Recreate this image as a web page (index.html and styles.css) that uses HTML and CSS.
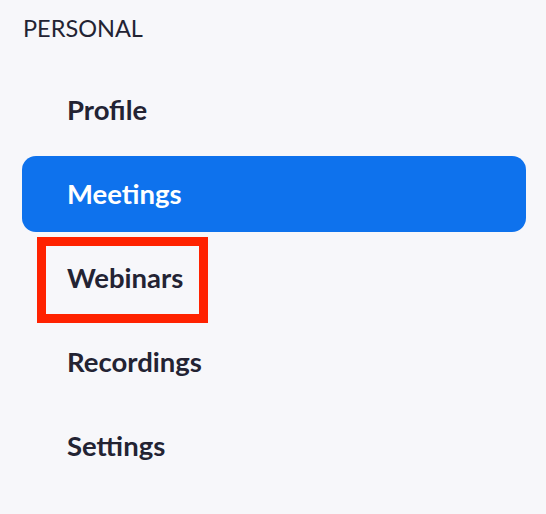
FILE: index.html
```html
<!DOCTYPE html>
<html>
<head>
<meta charset="utf-8">
<link rel="stylesheet" href="styles.css">
</head>
<body>
<nav class="sidebar">
  <div class="section-title">PERSONAL</div>
  <ul class="menu">
    <li class="menu-item">Profile</li>
    <li class="menu-item active">Meetings</li>
    <li class="menu-item highlighted">Webinars<span class="annotation"></span></li>
    <li class="menu-item">Recordings</li>
    <li class="menu-item">Settings</li>
  </ul>
</nav>
</body>
</html>
```

FILE: styles.css
```css
html, body {
  margin: 0;
  padding: 0;
  background: #f7f7fa;
}

body {
  width: 546px;
  height: 514px;
  overflow: hidden;
  font-family: Lato, "Liberation Sans", sans-serif;
  color: #232333;
}

.sidebar {
  padding: 14px 20px 0 22px;
}

.section-title {
  font-size: 23.5px;
  line-height: 28px;
  font-weight: 400;
  padding-left: 1px;
  margin-bottom: 30px;
}

.menu {
  list-style: none;
  margin: 0;
  padding: 0;
  display: flex;
  flex-direction: column;
  gap: 8px;
}

.menu-item {
  position: relative;
  box-sizing: border-box;
  height: 76px;
  display: flex;
  align-items: center;
  padding-left: 45px;
  padding-bottom: 2px;
  font-size: 27.5px;
  font-weight: 700;
  border-radius: 14px;
}

.menu-item.active {
  background: #0e72ed;
  color: #ffffff;
}

.annotation {
  position: absolute;
  left: 15px;
  top: -3px;
  width: 171px;
  height: 86px;
  box-sizing: border-box;
  border: 9px solid #ff2200;
}
```
